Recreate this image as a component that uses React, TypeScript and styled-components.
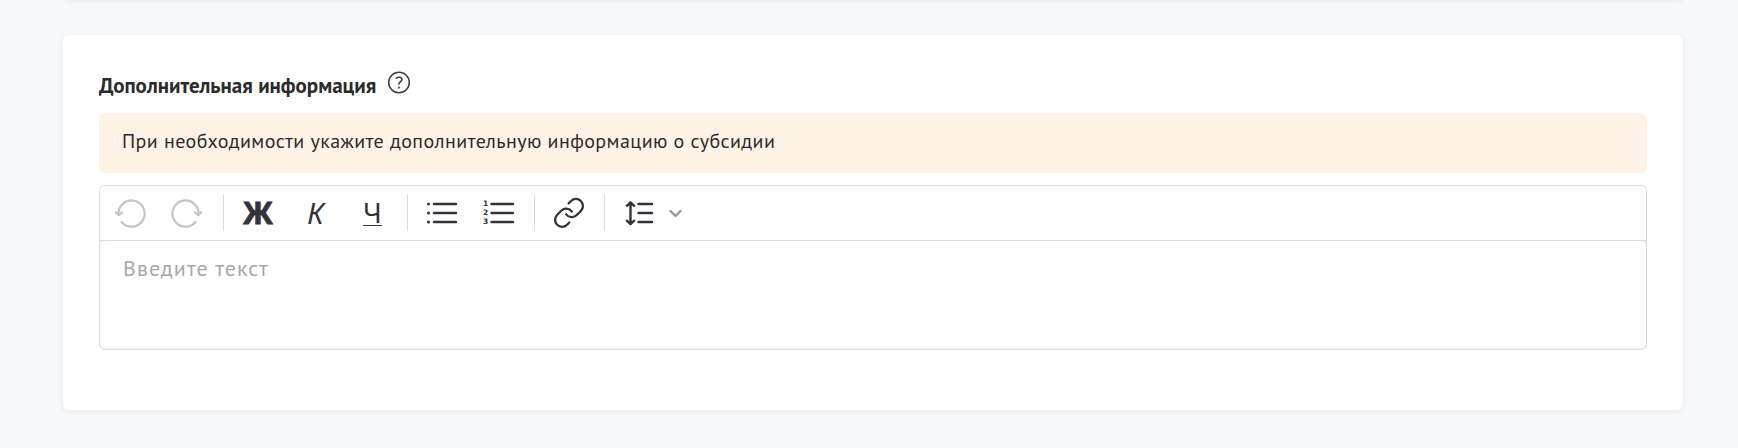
import React from "react";
import styled, { createGlobalStyle } from "styled-components";

const GlobalStyle = createGlobalStyle`
  * { box-sizing: border-box; }
  body {
    margin: 0;
    background: #f8f9fb;
    color: #2b2b2b;
    font-family: "PT Sans", "Noto Sans", sans-serif;
    overflow: hidden;
  }
`;

const Page = styled.main`
  height: 448px;
  padding: 0 55px 0 63px;
  display: flex;
  flex-direction: column;
  gap: 35px;
  overflow: hidden;
`;

const Card = styled.section`
  flex: none;
  height: 375px;
  padding: 36px;
  background: #fff;
  border-radius: 6px;
  box-shadow: 0 1px 6px rgba(0, 0, 0, 0.07);
`;

const PreviousCard = styled(Card)`
  height: 20px;
  margin-top: -20px;
  padding: 0;
`;

const Heading = styled.header`
  display: flex;
  height: 42px;
  gap: 13px;
`;

const Title = styled.h2`
  margin: 0;
  width: 276px;
  font-size: 21px;
  line-height: 29px;
  font-weight: 700;
  white-space: nowrap;
`;

const HelpButton = styled.button`
  width: 22px;
  height: 22px;
  padding: 0;
  border: 0;
  background: none;
  color: #3c3e46;
`;

const Notice = styled.p`
  margin: 0 0 12px;
  height: 60px;
  padding: 0 23px;
  border-radius: 6px;
  background: #fff2e6;
  font-size: 20px;
  line-height: 57px;
  letter-spacing: 0.43px;
  white-space: nowrap;
`;

const Editor = styled.div`
  height: 165px;
  border: 1px solid #dadae2;
  border-radius: 6px;
  background: #f3f3f5;
  overflow: hidden;
`;

const Toolbar = styled.div`
  height: 55px;
  display: flex;
  align-items: center;
  background: #fff;
  border-bottom: 1px solid #dadae2;
`;

const Group = styled.div<{ $width: number }>`
  width: ${(p) => p.$width}px;
  height: 36px;
  flex: none;
  display: flex;
  & + & { border-left: 1px solid #dadae2; }
`;

const Tool = styled.button<{ $width: number; $indent?: number }>`
  width: ${(p) => p.$width}px;
  margin: 0 0 0 ${(p) => p.$indent ?? 0}px;
  height: 36px;
  flex: none;
  padding: 0;
  border: 0;
  background: none;
  color: #32343c;
  font: 400 30px/34px "Noto Sans", sans-serif;
  text-align: center;
`;

const Bold = styled(Tool)`
  font-weight: 700;
  -webkit-text-stroke: 0.9px currentColor;
`;
const Italic = styled(Tool)`
  font-style: italic;
  font-size: 29px;
  line-height: 33px;
  padding: 0 0 2px;
`;
const Underline = styled(Tool)`
  font-size: 28px;
  line-height: 33px;
  padding-bottom: 2px;
  text-decoration: underline;
  text-decoration-thickness: 1px;
  text-underline-offset: 2px;
`;

const Icon = styled.svg`
  display: block;
  fill: none;
  stroke: currentColor;
  stroke-width: 2.4;
  stroke-linecap: round;
  stroke-linejoin: round;
  overflow: visible;
  text { fill: currentColor; stroke: none; }
`;

const HelpIcon = styled(Icon)` stroke-width: 1.5; `;

const MutedIcon = styled(Icon)` color: #c4c4c4; stroke-width: 2.2; `;

const TextArea = styled.div`
  height: 107px;
  padding: 9px 23px;
  border-radius: 6px;
  background: #fff;
  color: #a8a8a8;
  font-size: 22px;
  line-height: 36px;
  letter-spacing: 1.1px;
`;

const Digits = styled.text`
  font: 700 7.5px "DejaVu Sans", sans-serif;
`;

export default function App() {
  return (
    <>
      <GlobalStyle />
      <Page>
        <PreviousCard />
        <Card>
          <Heading>
            <Title>Дополнительная информация</Title>
            <HelpButton aria-label="Справка">
              <HelpIcon width="22" height="22" viewBox="0 0 22 22">
                <circle cx="11" cy="11.5" r="10.3" />
                <path d="M8.2 7.2c1.4-1.4 5.7-1.4 5.7 1.2 0 2.1-3 2.4-3 4.8" />
                <circle cx="10.9" cy="16.6" r=".4" />
              </HelpIcon>
            </HelpButton>
          </Heading>
          <Notice>При необходимости укажите дополнительную информацию о субсидии</Notice>
          <Editor>
            <Toolbar>
              <Group $width={123}>
                <Tool $width={56} aria-label="Отменить">
                  <MutedIcon width="56" height="36" viewBox="0 0 56 36">
                    <path d="M18.5 20A13.1 13.1 0 1 1 21.5 27M16 17.2l2.7 3 3.5-2.8" />
                  </MutedIcon>
                </Tool>
                <Tool $width={56} aria-label="Повторить">
                  <MutedIcon width="56" height="36" viewBox="0 0 56 36">
                    <path d="M42.5 20A13.1 13.1 0 1 0 39.5 27M45 17.2l-2.7 3-3.5-2.8" />
                  </MutedIcon>
                </Tool>
              </Group>
              <Group $width={184}>
                <Bold $width={58} $indent={5}>Ж</Bold>
                <Italic $width={57}>К</Italic>
                <Underline $width={57}>Ч</Underline>
              </Group>
              <Group $width={127}>
                <Tool $width={63} aria-label="Маркированный список">
                  <Icon width="63" height="36">
                    <path d="M26 9H48M26 18H48M26 27H48" />
                    <path d="M20.5 9h.01M20.5 18h.01M20.5 27h.01" strokeWidth="3" />
                  </Icon>
                </Tool>
                <Tool $width={63} aria-label="Нумерованный список">
                  <Icon width="63" height="36">
                    <path d="M20.5 9H42M20.5 18H42M20.5 27H42" />
                    <Digits x="12" y="11">1</Digits>
                    <Digits x="12" y="20">2</Digits>
                    <Digits x="12" y="29">3</Digits>
                  </Icon>
                </Tool>
              </Group>
              <Group $width={70}>
                <Tool $width={69} aria-label="Ссылка">
                  <Icon width="69" height="36">
                    <g transform="translate(17.2 1.1) scale(1.4)" strokeWidth="1.6">
                      <path d="M10 13a5 5 0 0 0 7.54.54l3-3a5 5 0 0 0-7.07-7.07l-1.72 1.71" />
                      <path d="M14 11a5 5 0 0 0-7.54-.54l-3 3a5 5 0 0 0 7.07 7.07l1.71-1.71" />
                    </g>
                  </Icon>
                </Tool>
              </Group>
              <Group $width={100}>
                <Tool $width={90} aria-label="Межстрочный интервал">
                  <Icon width="90" height="36">
                    <path d="M25.5 8V28M21.8 10.8l3.7-3.3 3.7 3.3M21.8 25.7l3.7 3.3 3.7-3.3" />
                    <path d="M33.5 9H47M33.5 18H47M33.5 27H47" />
                    <path d="M65.5 16l5 5 5-5" stroke="#999" />
                  </Icon>
                </Tool>
              </Group>
            </Toolbar>
            <TextArea>Введите текст</TextArea>
          </Editor>
        </Card>
      </Page>
    </>
  );
}
